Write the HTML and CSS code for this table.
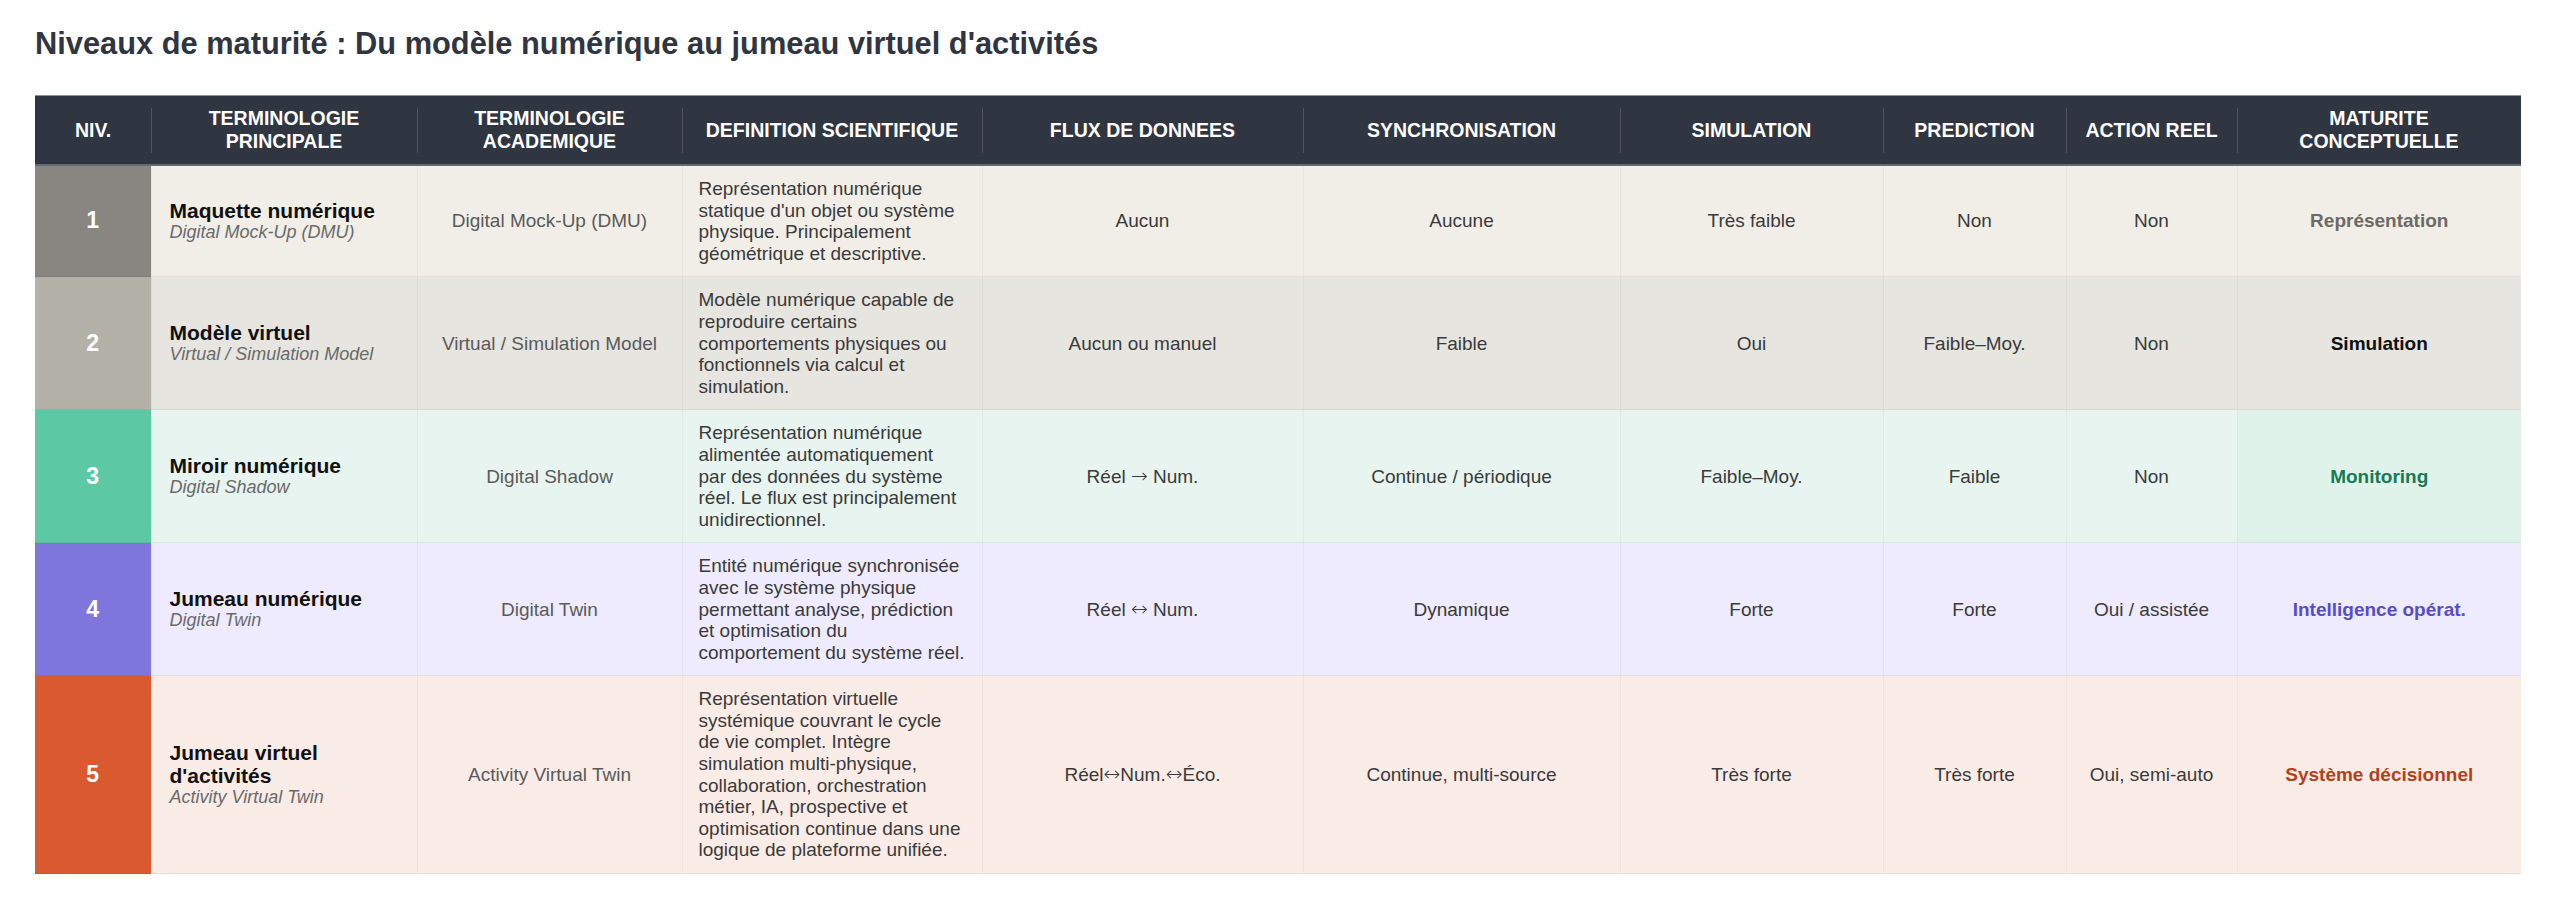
FILE: index.html
```html
<!DOCTYPE html>
<html lang="fr">
<head>
<meta charset="utf-8">
<title>Niveaux de maturité</title>
<link rel="stylesheet" href="styles.css">
</head>
<body>
<main class="page">
  <h1 class="title">Niveaux de maturité : Du modèle numérique au jumeau virtuel d'activités</h1>
  <table class="grid">
    <colgroup>
      <col class="c-niv"><col class="c-term"><col class="c-acad"><col class="c-def"><col class="c-flux">
      <col class="c-sync"><col class="c-sim"><col class="c-pred"><col class="c-act"><col class="c-mat">
    </colgroup>
    <thead>
      <tr>
        <th class="first">NIV.</th>
        <th>TERMINOLOGIE<br>PRINCIPALE</th>
        <th>TERMINOLOGIE<br>ACADEMIQUE</th>
        <th>DEFINITION SCIENTIFIQUE</th>
        <th>FLUX DE DONNEES</th>
        <th>SYNCHRONISATION</th>
        <th>SIMULATION</th>
        <th>PREDICTION</th>
        <th>ACTION REEL</th>
        <th>MATURITE<br>CONCEPTUELLE</th>
      </tr>
    </thead>
    <tbody>
      <tr class="lvl1">
        <td class="niv">1</td>
        <td class="name"><div class="main">Maquette numérique</div><div class="sub">Digital Mock-Up (DMU)</div></td>
        <td class="acad">Digital Mock-Up (DMU)</td>
        <td class="def">Représentation numérique statique d'un objet ou système physique. Principalement géométrique et descriptive.</td>
        <td>Aucun</td>
        <td>Aucune</td>
        <td>Très faible</td>
        <td>Non</td>
        <td>Non</td>
        <td class="mat">Représentation</td>
      </tr>
      <tr class="lvl2">
        <td class="niv">2</td>
        <td class="name"><div class="main">Modèle virtuel</div><div class="sub">Virtual / Simulation Model</div></td>
        <td class="acad">Virtual / Simulation Model</td>
        <td class="def">Modèle numérique capable de reproduire certains comportements physiques ou fonctionnels via calcul et simulation.</td>
        <td>Aucun ou manuel</td>
        <td>Faible</td>
        <td>Oui</td>
        <td>Faible–Moy.</td>
        <td>Non</td>
        <td class="mat">Simulation</td>
      </tr>
      <tr class="lvl3">
        <td class="niv">3</td>
        <td class="name"><div class="main">Miroir numérique</div><div class="sub">Digital Shadow</div></td>
        <td class="acad">Digital Shadow</td>
        <td class="def">Représentation numérique alimentée automatiquement par des données du système réel. Le flux est principalement unidirectionnel.</td>
        <td>Réel <span class="arrow">→</span> Num.</td>
        <td>Continue / périodique</td>
        <td>Faible–Moy.</td>
        <td>Faible</td>
        <td>Non</td>
        <td class="mat">Monitoring</td>
      </tr>
      <tr class="lvl4">
        <td class="niv">4</td>
        <td class="name"><div class="main">Jumeau numérique</div><div class="sub">Digital Twin</div></td>
        <td class="acad">Digital Twin</td>
        <td class="def">Entité numérique synchronisée avec le système physique permettant analyse, prédiction et optimisation du comportement du système réel.</td>
        <td>Réel <span class="arrow">↔</span> Num.</td>
        <td>Dynamique</td>
        <td>Forte</td>
        <td>Forte</td>
        <td>Oui / assistée</td>
        <td class="mat">Intelligence opérat.</td>
      </tr>
      <tr class="lvl5">
        <td class="niv">5</td>
        <td class="name"><div class="main">Jumeau virtuel d'activités</div><div class="sub">Activity Virtual Twin</div></td>
        <td class="acad">Activity Virtual Twin</td>
        <td class="def">Représentation virtuelle systémique couvrant le cycle de vie complet. Intègre simulation multi-physique, collaboration, orchestration métier, IA, prospective et optimisation continue dans une logique de plateforme unifiée.</td>
        <td>Réel<span class="arrow">↔</span>Num.<span class="arrow">↔</span>Éco.</td>
        <td>Continue, multi-source</td>
        <td>Très forte</td>
        <td>Très forte</td>
        <td>Oui, semi-auto</td>
        <td class="mat">Système décisionnel</td>
      </tr>
    </tbody>
  </table>
</main>
</body>
</html>
```

FILE: styles.css
```css
html, body {
  margin: 0;
  padding: 0;
  background: #ffffff;
}

.page {
  padding: 26px 39px 0 35px;
  font-family: "Liberation Sans", Arial, sans-serif;
  color: #3a3a3a;
}

.title {
  margin: 0 0 34px 0;
  font-size: 30.8px;
  font-weight: 700;
  line-height: 35px;
  color: #2f3541;
}

.grid {
  width: 2486px;
  table-layout: fixed;
  border-collapse: collapse;
  border-spacing: 0;
}

.c-niv { width: 116px; }
.c-term { width: 266px; }
.c-acad { width: 265px; }
.c-def { width: 300px; }
.c-flux { width: 321px; }
.c-sync { width: 317px; }
.c-sim { width: 263px; }
.c-pred { width: 183px; }
.c-act { width: 171px; }
.c-mat { width: 284px; }

.grid th {
  background: #2f3541 linear-gradient(rgba(255,255,255,0.16), rgba(255,255,255,0.16)) left center / 1px 66% no-repeat;
  color: #ffffff;
  font-size: 19.5px;
  font-weight: 700;
  line-height: 23px;
  text-align: center;
  vertical-align: middle;
  padding: 11px 10px;
  border-top: 1px solid #8c9098;
  border-bottom: 2px solid #646a74;
}

.grid th.first {
  background: #2f3541;
}

.grid td {
  font-size: 19px;
  line-height: 21.6px;
  text-align: center;
  vertical-align: middle;
  padding: 12px 16px;
  color: #3a3a3a;
  border-bottom: 1px solid rgba(0, 0, 0, 0.055);
  border-left: 1px solid rgba(0, 0, 0, 0.035);
}

.arrow {
  font-family: "DejaVu Sans", sans-serif;
  font-size: 20px;
  font-weight: 200;
  line-height: 1;
}

.grid td.niv {
  color: #ffffff;
  font-size: 23px;
  font-weight: 700;
  border-left: 0;
  padding: 0;
}

.grid td.name {
  text-align: left;
  padding-left: 18px;
  padding-right: 16px;
}

.name .main {
  font-size: 21px;
  line-height: 23px;
  font-weight: 700;
  color: #111111;
}

.name .sub {
  font-size: 18px;
  line-height: 21px;
  font-style: italic;
  color: #6a6a6a;
}

.grid td.acad {
  color: #5a5a5a;
}

.grid td.def {
  text-align: left;
  color: #3a3a3a;
}

.grid td.mat {
  font-weight: 700;
}

.lvl1 td { background: #f1eee8; }
.lvl1 td.niv { background: #878680; }
.lvl1 td.mat { color: #6b6a66; }

.lvl2 td { background: #e6e5e0; }
.lvl2 td.niv { background: #b3b0a8; }
.lvl2 td.mat { color: #111111; }

.lvl3 td { background: #e7f4f0; }
.lvl3 td.niv { background: #5dc9a4; }
.lvl3 td.mat { color: #177a55; background: #dff3eb; }

.lvl4 td { background: #edebfd; }
.lvl4 td.niv { background: #7f76dd; }
.lvl4 td.mat { color: #5a4bc6; }

.lvl5 td { background: #f9ebe6; }
.lvl5 td.niv { background: #d95a31; }
.lvl5 td.mat { color: #b0431c; }
```
